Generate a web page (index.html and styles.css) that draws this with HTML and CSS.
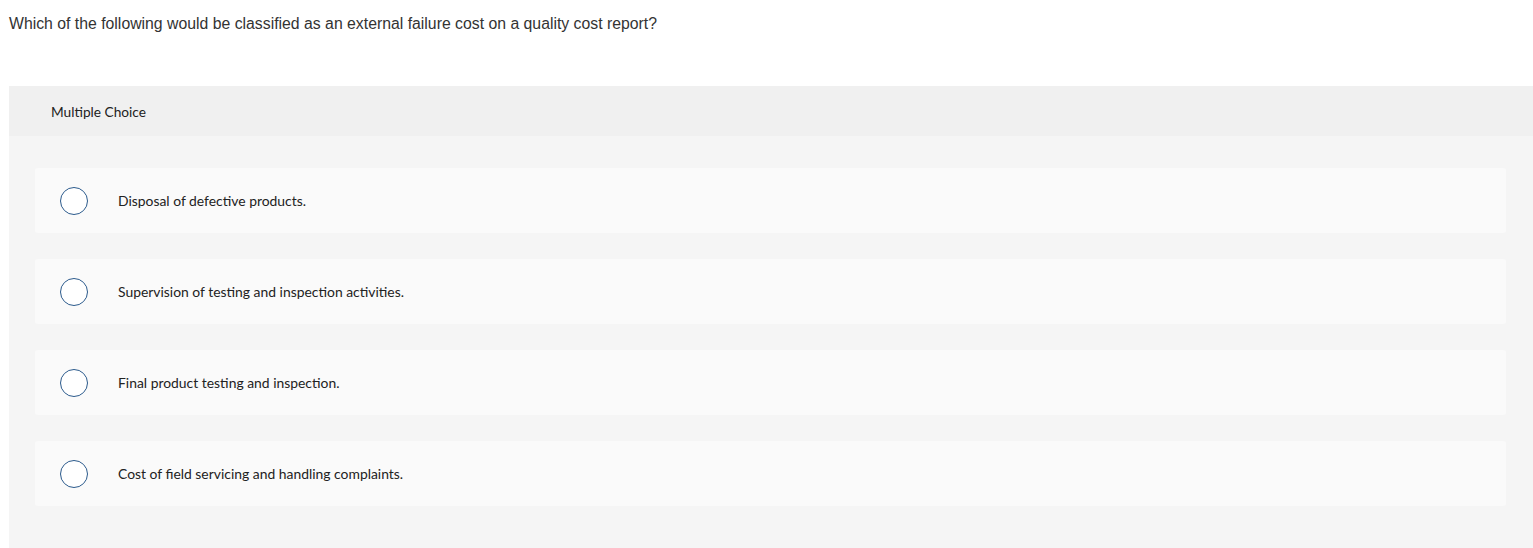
FILE: index.html
```html
<!DOCTYPE html>
<html>
<head>
<meta charset="utf-8">
<link rel="stylesheet" href="styles.css">
</head>
<body>
<div class="page">
  <p class="question">Which of the following would be classified as an external failure cost on a quality cost report?</p>
  <section class="mc">
    <div class="mc-header">Multiple Choice</div>
    <div class="mc-body">
      <label class="option"><span class="radio"></span><span class="opt-text">Disposal of defective products.</span></label>
      <label class="option"><span class="radio"></span><span class="opt-text">Supervision of testing and inspection activities.</span></label>
      <label class="option"><span class="radio"></span><span class="opt-text">Final product testing and inspection.</span></label>
      <label class="option"><span class="radio"></span><span class="opt-text">Cost of field servicing and handling complaints.</span></label>
    </div>
  </section>
</div>
</body>
</html>
```
FILE: styles.css
```css
html, body {
  margin: 0;
  padding: 0;
  background: #ffffff;
}
body {
  font-family: "Liberation Sans", Arial, sans-serif;
  color: #333333;
  overflow: hidden;
}
.page {
  padding-left: 9px;
}
.question {
  margin: 0;
  padding-top: 14px;
  height: 86px;
  box-sizing: border-box;
  font-size: 15.8px;
  line-height: 19px;
  color: #333333;
}
.mc {
  background: #f5f5f5;
  min-height: 480px;
}
.mc-header {
  background: #f0f0f0;
  height: 50px;
  display: flex;
  align-items: center;
  padding-left: 42px;
  font-family: Lato, "Open Sans", sans-serif;
  font-size: 13.7px;
  color: #222222;
}
.mc-body {
  padding: 32px 27px 40px 26px;
  display: flex;
  flex-direction: column;
  gap: 26px;
}
.option {
  background: #fafafa;
  border-radius: 3px;
  height: 65px;
  display: flex;
  align-items: center;
  padding-left: 25px;
}
.radio {
  box-sizing: border-box;
  width: 28px;
  height: 28px;
  border: 1.5px solid #2b5a8c;
  border-radius: 50%;
  background: #ffffff;
  flex: none;
}
.opt-text {
  margin-left: 30px;
  font-family: Lato, "Open Sans", sans-serif;
  font-size: 13.9px;
  color: #222222;
}
```
